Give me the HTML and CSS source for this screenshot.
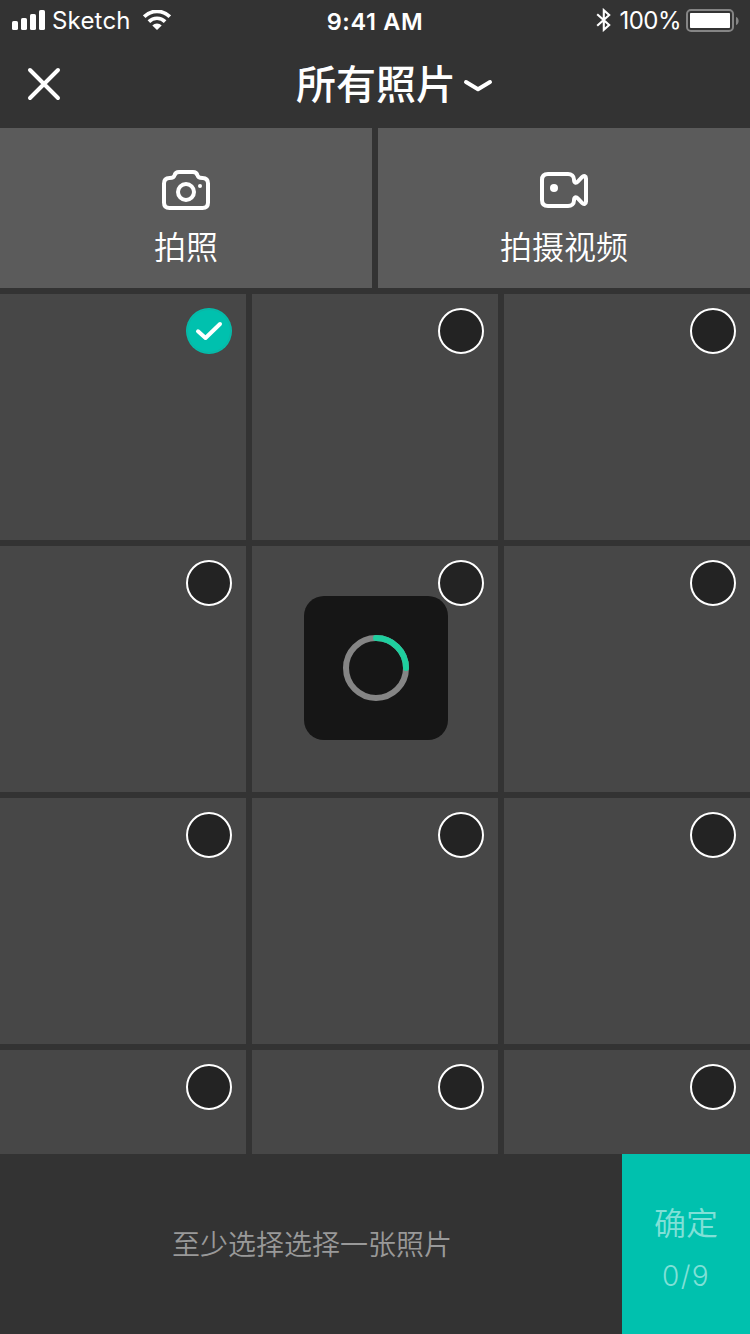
FILE: index.html
```html
<!DOCTYPE html>
<html lang="zh-CN">
<head>
<meta charset="utf-8">
<title>所有照片</title>
<link rel="stylesheet" href="styles.css">
</head>
<body>
<main class="screen">
  <header class="status">
    <div class="status-left">
      <svg class="signal" width="33" height="20" viewBox="0 0 33 20" fill="#fff"><rect y="11" width="6" height="9" rx="1.6"/><rect x="9" y="8" width="6" height="12" rx="1.6"/><rect x="18" y="4" width="6" height="16" rx="1.6"/><rect x="27" width="6" height="20" rx="1.6"/></svg>
      <span class="carrier">Sketch</span>
      <svg class="wifi" width="28" height="20" viewBox="0 0 28 20"><path d="M1.2 6.6A18.2 18.2 0 0 1 26.8 6.6M5.9 11.6A11.5 11.5 0 0 1 22.1 11.6" fill="none" stroke="#fff" stroke-width="3.7"/><path d="M14 20 9.3 15.4A6.8 6.8 0 0 1 18.7 15.4Z" fill="#fff"/></svg>
    </div>
    <span class="time">9:41 AM</span>
    <div class="status-right">
      <svg class="bluetooth" width="16" height="24" viewBox="0 0 16 24" fill="none" stroke="#fff" stroke-width="2.1"><path d="M1.2 6.2 13.2 17 7.8 21.8V2.2L13.2 7 1.2 17.8"/></svg>
      <span class="percent">100%</span>
      <svg class="battery" width="54" height="24" viewBox="0 0 54 24"><rect x="1" y="1" width="46" height="21" rx="4" fill="none" stroke="#858585" stroke-width="2"/><rect x="4" y="4" width="40" height="15" rx=".8" fill="#fff"/><path d="M50 8C53.5 9 53.5 15 50 16Z" fill="#858585"/></svg>
    </div>
  </header>
  <nav class="nav">
    <svg class="close" width="34" height="34" viewBox="0 0 34 34" fill="none" stroke="#fff" stroke-width="4" stroke-linecap="round"><path d="M3 3 31 31M31 3 3 31"/></svg>
    <h1 class="title">所有照片</h1>
    <svg class="chevron" width="30" height="14" viewBox="0 0 30 14" fill="none" stroke="#fff" stroke-width="4" stroke-linecap="round" stroke-linejoin="round"><path d="M3 3 15 10.2 27 3"/></svg>
  </nav>
  <section class="capture">
    <div class="action">
      <svg width="48" height="40" viewBox="0 0 48 40" fill="none" stroke="#fff" stroke-width="4"><path d="M7.5 8C10.8 8 12.1 7.2 12.5 5.4 13.1 3 14.8 2 17 2H31C33.2 2 34.9 3 35.5 5.4 35.9 7.2 37.2 8 40.5 8 44.2 8 46 10 46 13.5V32.5Q46 38 40.5 38H7.5Q2 38 2 32.5V13.5C2 10 3.8 8 7.5 8Z"/><circle cx="24" cy="22" r="8"/><circle cx="38" cy="16" r="2" fill="#fff" stroke="none"/></svg>
      <span>拍照</span>
    </div>
    <div class="action">
      <svg width="48" height="40" viewBox="0 0 48 40" fill="none" stroke="#fff" stroke-width="4" stroke-linejoin="round"><path d="M8 4H28C31.5 4 34 6.2 34 9.5 34 13.2 36 13.5 38 11.3L42 7.2C44 5.2 46 6.2 46 8.5V31.5C46 33.8 44 34.8 42 32.8L38 28.7C36 26.5 34 26.8 34 30.5 34 33.8 31.5 36 28 36H8Q2 36 2 30V10Q2 4 8 4Z"/><circle cx="14" cy="18" r="4" fill="#fff" stroke="none"/></svg>
      <span>拍摄视频</span>
    </div>
  </section>
  <section class="photos">
    <div class="photo"><i class="check selected"><svg width="46" height="46" viewBox="0 0 46 46" fill="none"><circle cx="23" cy="23" r="21.5" stroke="#16ab9d" stroke-width=".6"/><path d="M12 23.3 19.5 30 34 16" stroke="#fff" stroke-width="4" stroke-linecap="round" stroke-linejoin="round"/></svg></i></div>
    <div class="photo"><i class="check"></i></div>
    <div class="photo"><i class="check"></i></div>
    <div class="photo"><i class="check"></i></div>
    <div class="photo"><i class="check"></i></div>
    <div class="photo"><i class="check"></i></div>
    <div class="photo"><i class="check"></i></div>
    <div class="photo"><i class="check"></i></div>
    <div class="photo"><i class="check"></i></div>
    <div class="photo"><i class="check"></i></div>
    <div class="photo"><i class="check"></i></div>
    <div class="photo"><i class="check"></i></div>
  </section>
  <footer class="footer">
    <p class="hint">至少选择选择一张照片</p>
    <div class="confirm"><span class="confirm-label">确定</span><span class="count">0/9</span></div>
  </footer>
  <div class="loading">
    <svg width="72" height="72" viewBox="0 0 72 72" fill="none" stroke-width="6"><circle cx="36" cy="36" r="30" stroke="#858585"/><path d="M36 6A30 30 0 0 1 66 36" stroke="#1fcf9f" stroke-linecap="round"/></svg>
  </div>
</main>
</body>
</html>
```
FILE: styles.css
```css
* { box-sizing: border-box; }
body { margin: 0; background: #333; }
.screen {
  position: relative;
  width: 750px;
  height: 1334px;
  overflow: hidden;
  display: flex;
  flex-direction: column;
  background: #333;
  color: #fff;
  font-family: Inter, "Noto Sans CJK SC", sans-serif;
}
.status {
  height: 40px;
  flex: none;
  display: grid;
  grid-template-columns: 1fr auto 1fr;
  align-items: center;
  padding: 0 10px 0 12px;
  font-size: 24px;
  line-height: 32px;
}
.status-left, .status-right { display: flex; align-items: center; }
.status-right { justify-content: flex-end; }
.carrier { margin: 2px 0 0 7px; letter-spacing: .2px; }
.wifi { margin-left: 12px; }
.time { margin: 4px 2px 0 0; font-weight: 600; font-size: 23.5px; letter-spacing: .65px; }
.bluetooth { margin-right: 7px; }
.percent { margin: 2px 5px 0 0; letter-spacing: -.5px; }
.battery { margin-top: 2px; }
.nav {
  height: 88px;
  flex: none;
  display: flex;
  align-items: center;
  padding-left: 27px;
}
.title {
  margin: 2px 0 0 235px;
  font-size: 40px;
  line-height: 56px;
  font-weight: 500;
}
.chevron { margin: 4px 0 0 7px; }
.capture {
  flex: none;
  height: 160px;
  display: grid;
  grid-template-columns: 1fr 1fr;
  gap: 6px;
}
.action {
  background: #5b5b5b;
  display: flex;
  flex-direction: column;
  align-items: center;
  padding-top: 42px;
  font-size: 32px;
  line-height: 44px;
}
.action span { margin-top: 16px; font-weight: 350; }
.photos {
  flex: 1;
  min-height: 0;
  margin-top: 6px;
  display: grid;
  grid-template-columns: repeat(3, 1fr);
  grid-auto-rows: 246px;
  gap: 6px;
  overflow: hidden;
}
.photo {
  background: #474747;
  display: flex;
  justify-content: flex-end;
  padding: 14px;
}
.check {
  width: 46px;
  height: 46px;
  border: 2px solid #fff;
  border-radius: 50%;
  background: #232323;
}
.selected { border: 0; background: #00c1ae; }
.selected svg { display: block; }
.footer { flex: none; height: 180px; display: flex; background: #333; }
.hint {
  flex: 1;
  margin: 0;
  padding-left: 2px;
  text-align: center;
  font-size: 28px;
  line-height: 182px;
  color: #999;
  font-weight: 350;
}
.confirm {
  width: 128px;
  background: #00c1ae;
  color: #80e0d7;
  display: flex;
  flex-direction: column;
  align-items: center;
  padding-top: 47px;
}
.confirm-label { font-size: 32px; line-height: 46px; font-weight: 350; }
.count { margin-top: 11px; font-size: 28px; line-height: 36px; font-weight: 300; letter-spacing: 1.4px; }
.loading {
  position: absolute;
  left: 304px;
  top: 596px;
  width: 144px;
  height: 144px;
  border-radius: 20px;
  background: #161616;
  display: flex;
  align-items: center;
  justify-content: center;
}
```
